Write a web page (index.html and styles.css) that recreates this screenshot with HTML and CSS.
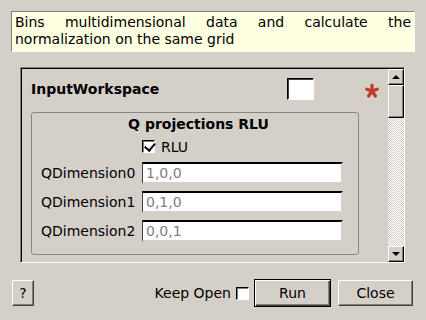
FILE: index.html
```html
<!DOCTYPE html>
<html>
<head>
<meta charset="UTF-8">
<link rel="stylesheet" href="styles.css">
</head>
<body>
<div class="dialog">
  <p class="description">Bins multidimensional data and calculate the normalization on the same grid</p>

  <div class="scroll-frame">
    <div class="scroll-content">
      <div class="prop-row">
        <span class="prop-name">InputWorkspace</span>
        <span class="combo"></span>
        <svg class="required" width="14" height="15" viewBox="0 0 14 15">
          <g stroke="#c0392b" stroke-width="3.2" stroke-linecap="round">
            <line x1="7" y1="8" x2="7" y2="2"/>
            <line x1="7" y1="8" x2="1.8" y2="6.2"/>
            <line x1="7" y1="8" x2="12.2" y2="6.2"/>
            <line x1="7" y1="8" x2="3.6" y2="13"/>
            <line x1="7" y1="8" x2="10.4" y2="13"/>
          </g>
        </svg>
      </div>

      <div class="group">
        <div class="group-title">Q projections RLU</div>
        <div class="group-grid">
          <label class="check check-rlu"><span class="check-box checked"></span>RLU</label>
          <span class="field-label">QDimension0</span>
          <span class="line-edit">1,0,0</span>
          <span class="field-label">QDimension1</span>
          <span class="line-edit">0,1,0</span>
          <span class="field-label">QDimension2</span>
          <span class="line-edit">0,0,1</span>
        </div>
      </div>
    </div>

    <div class="scrollbar">
      <div class="sb-btn"><span class="arrow-up"></span></div>
      <div class="sb-thumb"></div>
      <div class="sb-track"></div>
      <div class="sb-btn"><span class="arrow-down"></span></div>
    </div>
  </div>

  <div class="button-bar">
    <button class="btn btn-help">?</button>
    <span class="spacer"></span>
    <label class="check keep-open">Keep Open <span class="check-box"></span></label>
    <button class="btn btn-default">Run</button>
    <button class="btn btn-close">Close</button>
  </div>
</div>
</body>
</html>
```

FILE: styles.css
```css
:root {
  --bg: #d4d0c8;
  --dark: #808080;
  --darker: #404040;
  --light: #ffffff;
  --text: #000000;
  --muted: #808080;
  --tip: #ffffe1;
}

* {
  box-sizing: border-box;
  margin: 0;
  padding: 0;
}

body {
  width: 426px;
  height: 320px;
  overflow: hidden;
  background: var(--bg);
  font-family: "DejaVu Sans", sans-serif;
  font-size: 14px;
  color: var(--text);
}

.dialog {
  display: flex;
  flex-direction: column;
  height: 100%;
  padding: 11px 11px 0 11px;
}

.description {
  height: 41px;
  background: var(--tip);
  border: 1px solid;
  border-color: var(--dark) var(--light) var(--light) var(--dark);
  padding: 2px 3px 0 3px;
  text-align: justify;
  line-height: 17px;
}

/* scroll area */
.scroll-frame {
  display: flex;
  margin: 15px 10px 0 9px;
  height: 196px;
  border: 1px solid;
  border-color: var(--dark) var(--light) var(--light) var(--dark);
  box-shadow: inset 1px 1px 0 #000;
}

.scroll-content {
  flex: 1;
  overflow: hidden;
  padding: 10px 6px 0 10px;
}

.prop-row {
  display: flex;
  align-items: center;
  height: 22px;
}

.prop-name {
  font-weight: bold;
  width: 256px;
}

.combo {
  width: 27px;
  height: 22px;
  background: var(--light);
  border: 1px solid;
  border-color: #000 var(--light) var(--light) #000;
  box-shadow: inset 1px 1px 0 #404040;
}

.required {
  margin-left: 51px;
  margin-top: 2px;
}

.group {
  margin-top: 12px;
  width: 328px;
  height: 143px;
  border: 1px solid #8a8782;
  border-radius: 3px;
  padding: 2px 0 0 9px;
}

.group-title {
  font-weight: bold;
  text-align: center;
  padding-right: 2px;
  line-height: 18px;
}

.group-grid {
  display: grid;
  grid-template-columns: 101px 201px;
  row-gap: 7px;
  align-items: center;
  margin-top: 5px;
}

.check {
  display: flex;
  align-items: center;
  gap: 6px;
}

.check-rlu {
  grid-column: 2;
  height: 17px;
}

.check-box {
  width: 13px;
  height: 13px;
  background: var(--light);
  border: 1px solid;
  border-color: #000 var(--light) var(--light) #000;
  box-shadow: inset 1px 1px 0 var(--dark);
  position: relative;
}

.check-box.checked::after {
  content: "";
  position: absolute;
  left: 2px;
  top: 0;
  width: 5px;
  height: 8px;
  border: solid #000;
  border-width: 0 2px 2px 0;
  transform: rotate(40deg) translate(1px, -1px);
}

.field-label {
  line-height: 22px;
}

.line-edit {
  height: 22px;
  background: var(--light);
  border: 2px solid;
  border-color: #000 var(--bg) var(--bg) #404040;
  border-top-width: 2px;
  border-left-width: 1px;
  padding-left: 3px;
  color: var(--muted);
  line-height: 18px;
}

/* scrollbar */
.scrollbar {
  display: flex;
  flex-direction: column;
  width: 16px;
  margin: 1px 0 0 0;
}

.sb-btn,
.sb-thumb {
  background: var(--bg);
  border: 1px solid;
  border-color: var(--light) #000 #000 var(--light);
  box-shadow: inset -1px -1px 0 var(--dark);
}

.sb-btn {
  height: 16px;
  display: flex;
  align-items: center;
  justify-content: center;
}

.sb-thumb {
  height: 33px;
}

.sb-track {
  flex: 1;
  background: repeating-conic-gradient(var(--light) 0 25%, var(--bg) 0 50%) 0 0 / 2px 2px;
}

.arrow-up,
.arrow-down {
  width: 0;
  height: 0;
  border-left: 4px solid transparent;
  border-right: 4px solid transparent;
}

.arrow-up {
  border-bottom: 4px solid #000;
}

.arrow-down {
  border-top: 4px solid #000;
}

/* buttons */
.button-bar {
  display: flex;
  align-items: center;
  margin-top: 16px;
  margin-right: 2px;
}

.btn {
  font-family: inherit;
  font-size: 14px;
  height: 26px;
  background: var(--bg);
  color: var(--text);
  border: 1px solid;
  border-color: var(--light) var(--darker) var(--darker) var(--light);
  box-shadow: inset -1px -1px 0 var(--dark);
}

.btn-help {
  width: 22px;
  margin-left: 1px;
}

.spacer {
  flex: 1;
}

.keep-open {
  gap: 5px;
}

.btn-default {
  width: 77px;
  height: 28px;
  margin-left: 5px;
  border: 1px solid #000;
  box-shadow: inset 1px 1px 0 var(--light), inset -1px -1px 0 #404040, inset -2px -2px 0 var(--dark);
}

.btn-close {
  width: 75px;
  margin-left: 7px;
}
```
